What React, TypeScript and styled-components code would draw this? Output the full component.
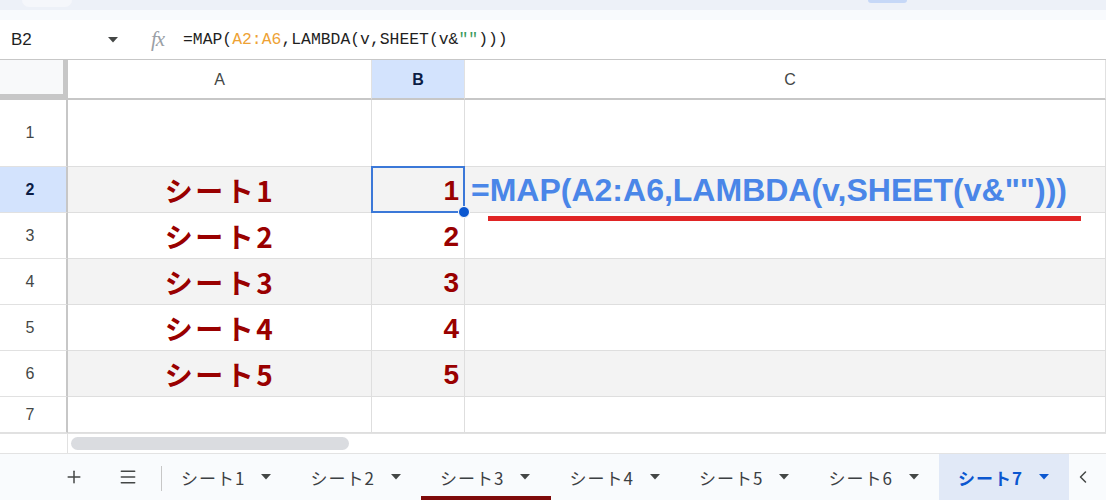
import styled, { createGlobalStyle } from 'styled-components'
import { Plus, Menu, ChevronLeft } from 'lucide-react'

const GlobalStyle = createGlobalStyle`
  html, body {
    margin: 0;
    padding: 0;
    background: #fff;
  }
  body {
    font-family: 'Liberation Sans', Arial, sans-serif;
    overflow: hidden;
  }
`

interface SheetRow {
  num: number
  height: number
  name: string
  value: string
}

const sheetRows: SheetRow[] = [
  { num: 1, height: 67, name: '', value: '' },
  { num: 2, height: 46, name: 'シート1', value: '1' },
  { num: 3, height: 46, name: 'シート2', value: '2' },
  { num: 4, height: 46, name: 'シート3', value: '3' },
  { num: 5, height: 46, name: 'シート4', value: '4' },
  { num: 6, height: 46, name: 'シート5', value: '5' },
  { num: 7, height: 36, name: '', value: '' },
]

const tabs = ['シート1', 'シート2', 'シート3', 'シート4', 'シート5', 'シート6', 'シート7']
const ACTIVE_TAB = 6
const COLORED_TAB = 2
const ACTIVE_ROW = 2

function Caret({ color = '#444746' }: { color?: string }) {
  return (
    <svg width="10" height="6" viewBox="0 0 10 6">
      <path d="M0 0h10L5 5.5z" fill={color} />
    </svg>
  )
}

function App() {
  return (
    <>
      <GlobalStyle />
      <Frame>
        <TopStrip>
          <GhostButton />
          <ModePill />
        </TopStrip>
        <SubStrip />

        <FormulaBar>
          <NameBox>
            <span>B2</span>
            <Caret />
          </NameBox>
          <FxLabel>fx</FxLabel>
          <FormulaInput>
            =MAP(<RangeRef>A2:A6</RangeRef>,LAMBDA(v,SHEET(v&amp;<StringLit>""</StringLit>)))
          </FormulaInput>
        </FormulaBar>

        <Grid $rows={sheetRows.map((r) => r.height)}>
          <Corner />
          <ColHead>A</ColHead>
          <ColHead $active>B</ColHead>
          <ColHead $shift={10}>C</ColHead>

          {sheetRows.map((row) => {
            const shade = row.num % 2 === 0
            const active = row.num === ACTIVE_ROW
            return [
              <RowHead key={`h${row.num}`} $active={active}>
                {row.num}
              </RowHead>,
              <Cell key={`a${row.num}`} $shade={shade} $align="center">
                <SheetName>{row.name}</SheetName>
              </Cell>,
              <Cell key={`b${row.num}`} $shade={shade} $align="right">
                <SheetNumber>{row.value}</SheetNumber>
                {active && (
                  <Selection>
                    <FillHandle />
                  </Selection>
                )}
              </Cell>,
              <Cell key={`c${row.num}`} $shade={shade} $align="left">
                {active && (
                  <>
                    <FormulaEcho>=MAP(A2:A6,LAMBDA(v,SHEET(v&amp;"")))</FormulaEcho>
                    <Underline />
                  </>
                )}
              </Cell>,
            ]
          })}
        </Grid>

        <ScrollRow>
          <ScrollCorner />
          <ScrollTrack>
            <ScrollThumb />
          </ScrollTrack>
        </ScrollRow>

        <TabBar>
          <BarButton>
            <Plus size={20} strokeWidth={1.8} />
          </BarButton>
          <BarButton>
            <Menu size={20} strokeWidth={1.8} />
          </BarButton>
          <Divider />
          {tabs.map((name, i) => (
            <Tab key={name} $active={i === ACTIVE_TAB} $color={i === COLORED_TAB ? '#7f0a0a' : undefined}>
              <TabName>{name}</TabName>
              <Caret color={i === ACTIVE_TAB ? '#0b57d0' : '#444746'} />
            </Tab>
          ))}
          <EndButton>
            <ChevronLeft size={20} strokeWidth={1.8} />
          </EndButton>
        </TabBar>
      </Frame>
    </>
  )
}

const Frame = styled.div`
  width: 1106px;
  height: 500px;
  display: flex;
  flex-direction: column;
  overflow: hidden;
  background: #fff;
`

const TopStrip = styled.div`
  height: 10px;
  flex-shrink: 0;
  display: flex;
  align-items: flex-start;
  background: #edf1f8;
`

const GhostButton = styled.div`
  margin-left: 22px;
  width: 50px;
  height: 7px;
  border-radius: 0 0 8px 8px;
  background: #f5f7fb;
`

const ModePill = styled.div`
  margin-left: 796px;
  width: 39px;
  height: 3px;
  border-radius: 0 0 3px 3px;
  background: #c6d8f7;
`

const SubStrip = styled.div`
  height: 10px;
  flex-shrink: 0;
  background: #f8fafd;
`

const FormulaBar = styled.div`
  box-sizing: border-box;
  height: 40px;
  flex-shrink: 0;
  display: flex;
  align-items: center;
  border-bottom: 1px solid #c7c7c7;
  background: #fff;
`

const NameBox = styled.div`
  box-sizing: border-box;
  width: 136px;
  padding: 0 18px 0 11px;
  display: flex;
  align-items: center;
  justify-content: space-between;
  font-size: 17px;
  color: #1f1f1f;
`

const FxLabel = styled.span`
  margin-left: 15px;
  width: 20px;
  font-family: 'Liberation Serif', serif;
  font-style: italic;
  font-size: 21px;
  color: #9aa0a6;
  letter-spacing: -1px;
`

const FormulaInput = styled.div`
  margin-left: 12px;
  font-family: 'Liberation Mono', monospace;
  font-size: 16.4px;
  color: #1f1f1f;
  white-space: pre;
`

const RangeRef = styled.span`
  color: #eea235;
`

const StringLit = styled.span`
  color: #3a9a5c;
`

const Grid = styled.div<{ $rows: number[] }>`
  flex-shrink: 0;
  display: grid;
  grid-template-columns: 68px 304px 93px 1fr;
  grid-template-rows: 40px ${(p) => p.$rows.map((h) => `${h}px`).join(' ')};
`

const Corner = styled.div`
  box-sizing: border-box;
  background: #f8f9fa;
  border-right: 5px solid #c7c7c7;
  border-bottom: 6px solid #c7c7c7;
`

const ColHead = styled.div<{ $active?: boolean; $shift?: number }>`
  box-sizing: border-box;
  display: flex;
  align-items: center;
  justify-content: center;
  padding: 2px 0 0 ${(p) => p.$shift ?? 0}px;
  border-right: 1px solid #e1e1e1;
  border-bottom: 2px solid #c7c7c7;
  background: ${(p) => (p.$active ? '#d3e3fd' : '#fff')};
  color: ${(p) => (p.$active ? '#0b1d45' : '#444746')};
  font-size: 16px;
  font-weight: ${(p) => (p.$active ? 700 : 400)};
`

const RowHead = styled.div<{ $active?: boolean }>`
  box-sizing: border-box;
  display: flex;
  align-items: center;
  justify-content: center;
  padding-right: 6px;
  border-right: 2px solid #c7c7c7;
  border-bottom: 1px solid #e1e1e1;
  background: ${(p) => (p.$active ? '#d3e3fd' : '#fff')};
  color: ${(p) => (p.$active ? '#0b1d45' : '#444746')};
  font-size: 16px;
  font-weight: ${(p) => (p.$active ? 700 : 400)};
`

const Cell = styled.div<{ $shade?: boolean; $align: 'left' | 'center' | 'right' }>`
  box-sizing: border-box;
  position: relative;
  display: flex;
  align-items: center;
  justify-content: ${(p) =>
    p.$align === 'center' ? 'center' : p.$align === 'right' ? 'flex-end' : 'flex-start'};
  padding: 0 5px 0 6px;
  border-right: 1px solid #dedede;
  border-bottom: 1px solid #dedede;
  background: ${(p) => (p.$shade ? '#f3f3f3' : '#fff')};
  white-space: nowrap;
`

const SheetName = styled.span`
  font-family: 'Noto Sans CJK JP', sans-serif;
  font-size: 28px;
  font-weight: 700;
  letter-spacing: 2.5px;
  line-height: 1;
  color: #990000;
`

const SheetNumber = styled.span`
  font-size: 28px;
  font-weight: 700;
  color: #990000;
  padding-top: 2px;
`

const Selection = styled.div`
  position: absolute;
  z-index: 2;
  top: -1px;
  left: -1px;
  right: -1px;
  bottom: -1px;
  border: 2px solid #3b78d8;
  pointer-events: none;
`

const FillHandle = styled.div`
  position: absolute;
  right: -7px;
  bottom: -7px;
  width: 10px;
  height: 10px;
  border-radius: 50%;
  background: #0b57d0;
  border: 1px solid #fff;
`

const FormulaEcho = styled.span`
  font-size: 32px;
  font-weight: 700;
  color: #4a86e8;
  padding-top: 2px;
`

const Underline = styled.div`
  position: absolute;
  z-index: 3;
  left: 23px;
  top: 49px;
  width: 593px;
  height: 5px;
  background: #e02424;
`

const ScrollRow = styled.div`
  box-sizing: border-box;
  height: 20px;
  flex-shrink: 0;
  display: flex;
  border-top: 1px solid #e1e1e1;
`

const ScrollCorner = styled.div`
  width: 67px;
  border-right: 1px solid #e1e1e1;
  background: #fff;
`

const ScrollTrack = styled.div`
  flex: 1;
  display: flex;
  align-items: center;
  padding-left: 3px;
`

const ScrollThumb = styled.div`
  width: 278px;
  height: 13px;
  border-radius: 7px;
  background: #dadce0;
`

const TabBar = styled.div`
  box-sizing: border-box;
  flex: 1;
  display: flex;
  align-items: stretch;
  padding-left: 56px;
  border-top: 1px solid #e3e3e3;
  background: #f9fbfd;
`

const BarButton = styled.div`
  width: 36px;
  display: flex;
  align-items: center;
  justify-content: center;
  color: #444746;
  & + & {
    margin-left: 18px;
  }
`

const EndButton = styled(BarButton)`
  width: 28px;
`

const Divider = styled.div`
  width: 1px;
  margin: 12px 0 9px 15px;
  background: #c7c7c7;
`

const Tab = styled.div<{ $active?: boolean; $color?: string }>`
  position: relative;
  box-sizing: border-box;
  width: 129.5px;
  display: flex;
  align-items: center;
  gap: 16px;
  padding-left: 19px;
  background: ${(p) => (p.$active ? '#e1e9f7' : 'transparent')};
  color: ${(p) => (p.$active ? '#0b57d0' : '#3c4043')};
  font-weight: ${(p) => (p.$active ? 700 : 400)};
  &::after {
    content: '';
    display: ${(p) => (p.$color ? 'block' : 'none')};
    position: absolute;
    left: 0;
    right: 0;
    bottom: 0;
    height: 4px;
    background: ${(p) => p.$color ?? 'transparent'};
  }
`

const TabName = styled.span`
  font-family: 'Noto Sans CJK JP', sans-serif;
  font-size: 17px;
  letter-spacing: 1px;
`

export default App
